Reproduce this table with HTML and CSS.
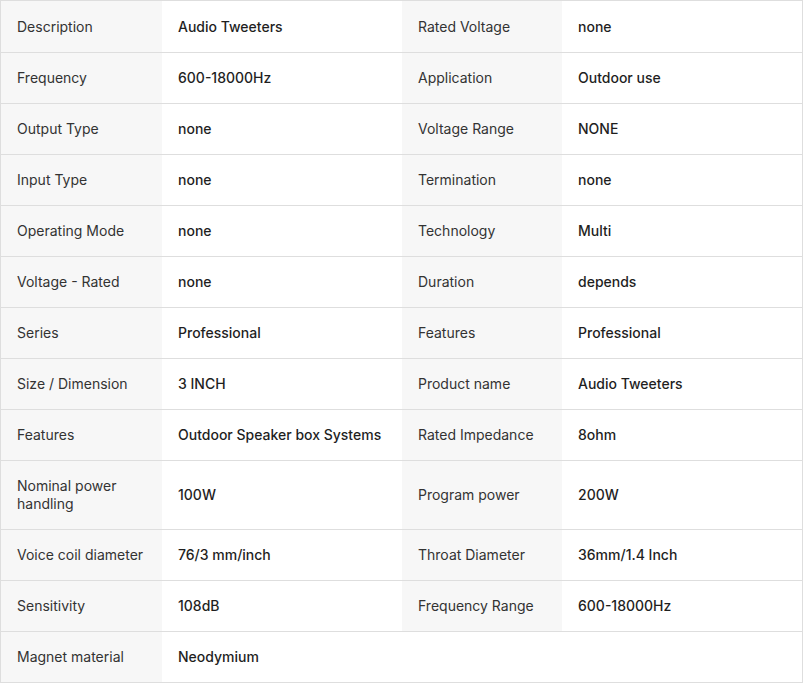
FILE: index.html
```html
<!DOCTYPE html>
<html>
<head>
<meta charset="utf-8">
<link rel="stylesheet" href="styles.css">
</head>
<body>
<table class="specs">
  <colgroup>
    <col class="c-label"><col class="c-value"><col class="c-label2"><col class="c-value">
  </colgroup>
  <tbody>
    <tr><td class="lbl">Description</td><td class="val">Audio Tweeters</td><td class="lbl">Rated Voltage</td><td class="val">none</td></tr>
    <tr><td class="lbl">Frequency</td><td class="val">600-18000Hz</td><td class="lbl">Application</td><td class="val">Outdoor use</td></tr>
    <tr><td class="lbl">Output Type</td><td class="val">none</td><td class="lbl">Voltage Range</td><td class="val">NONE</td></tr>
    <tr><td class="lbl">Input Type</td><td class="val">none</td><td class="lbl">Termination</td><td class="val">none</td></tr>
    <tr><td class="lbl">Operating Mode</td><td class="val">none</td><td class="lbl">Technology</td><td class="val">Multi</td></tr>
    <tr><td class="lbl">Voltage - Rated</td><td class="val">none</td><td class="lbl">Duration</td><td class="val">depends</td></tr>
    <tr><td class="lbl">Series</td><td class="val">Professional</td><td class="lbl">Features</td><td class="val">Professional</td></tr>
    <tr><td class="lbl">Size / Dimension</td><td class="val">3 INCH</td><td class="lbl">Product name</td><td class="val">Audio Tweeters</td></tr>
    <tr><td class="lbl">Features</td><td class="val">Outdoor Speaker box Systems</td><td class="lbl">Rated Impedance</td><td class="val">8ohm</td></tr>
    <tr><td class="lbl">Nominal power handling</td><td class="val">100W</td><td class="lbl">Program power</td><td class="val">200W</td></tr>
    <tr><td class="lbl">Voice coil diameter</td><td class="val">76/3 mm/inch</td><td class="lbl">Throat Diameter</td><td class="val">36mm/1.4 Inch</td></tr>
    <tr><td class="lbl">Sensitivity</td><td class="val">108dB</td><td class="lbl">Frequency Range</td><td class="val">600-18000Hz</td></tr>
    <tr><td class="lbl">Magnet material</td><td class="val">Neodymium</td><td class="empty"></td><td class="empty"></td></tr>
  </tbody>
</table>
</body>
</html>
```
FILE: styles.css
```css
html, body {
  margin: 0;
  padding: 0;
  background: #fff;
}
body {
  font-family: Inter, "Noto Sans", sans-serif;
  font-size: 14px;
  color: #222;
}
.specs {
  width: 803px;
  border-collapse: separate;
  border-spacing: 0;
  table-layout: fixed;
  border: 1px solid #dedede;
}
.c-label { width: 161px; }
.c-label2 { width: 160px; }
.c-value { width: 240px; }
.specs td {
  padding: 16px 16px;
  line-height: 18px;
  vertical-align: middle;
  text-align: left;
  border-top: 1px solid #dedede;
}
.specs tr:first-child td {
  border-top: 0;
  padding-top: 17px;
}
.lbl {
  background: #f7f7f7;
  color: #333;
  font-weight: 400;
}
.val {
  background: #fff;
  color: #1f1f1f;
  font-weight: 500;
}
.empty {
  background: #fff;
}
```
